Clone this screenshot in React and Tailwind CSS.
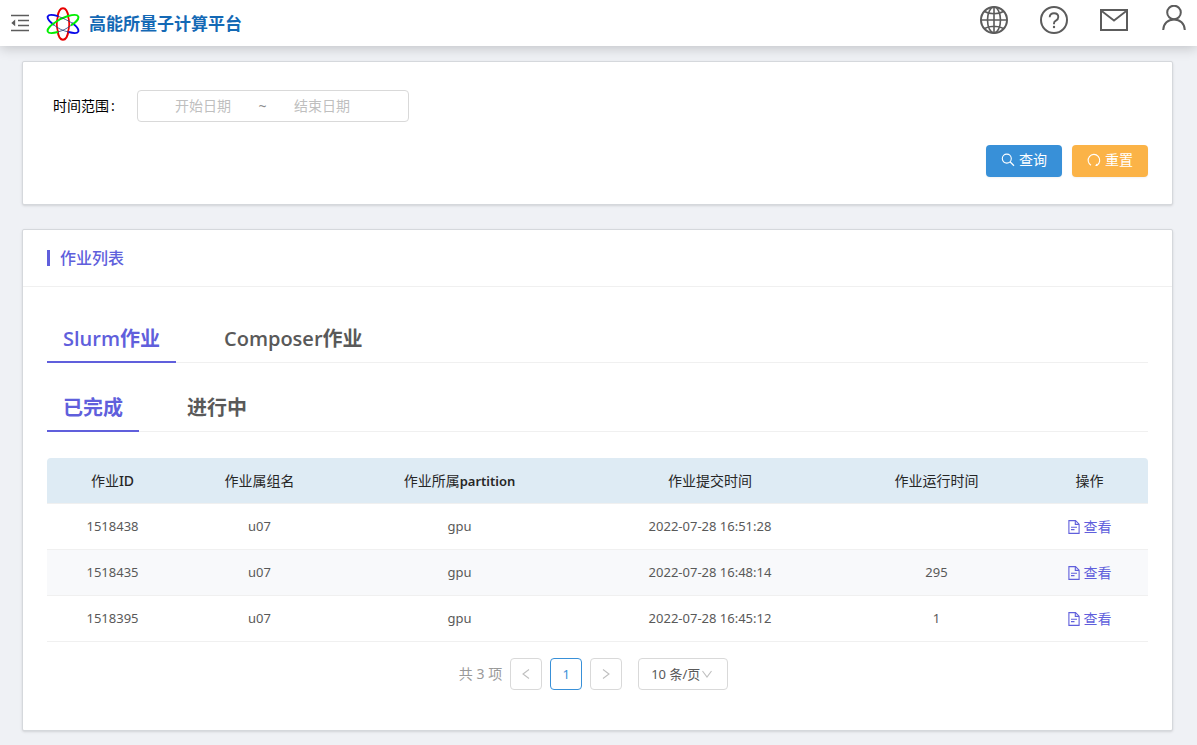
import React, { useState } from "react";

const jobs = [
    { id: "1518438", group: "u07", partition: "gpu", submitTime: "2022-07-28 16:51:28", runTime: "" },
    { id: "1518435", group: "u07", partition: "gpu", submitTime: "2022-07-28 16:48:14", runTime: "295" },
    { id: "1518395", group: "u07", partition: "gpu", submitTime: "2022-07-28 16:45:12", runTime: "1" },
];

const FoldIcon = () => (
    <svg width="18" height="18" viewBox="0 0 18 18" fill="none" stroke="#5c5c5c" strokeWidth="1.7">
        <path d="M0 1.5H18M7 6.5H18M7 11.5H18M0 16.5H18" />
        <path d="M4.2 5.5V12.3L0.3 8.9Z" fill="#5c5c5c" stroke="none" />
    </svg>
);

const Logo = () => (
    <svg width="34" height="34" viewBox="0 0 34 34" fill="none" strokeWidth="1.7">
        <path d="M12 9C10.5 14 10.5 20 12 25M22 9C23.5 14 23.5 20 22 25" stroke="#f00000" />
        <path d="M11.6 10C12.5 3.5 15 1.3 17 1.3C19 1.3 21.5 3.5 22.4 10M11.6 24C12.5 30.5 15 32.7 17 32.7C19 32.7 21.5 30.5 22.4 24" stroke="#e80000" strokeWidth="2" />
        <path d="M12 9.2C6 7.5 2.5 7.8 1.8 9.3C1 11.2 3.5 14.6 8 18M22.5 25C28 26.5 31.5 26.2 32.2 24.7C33 22.8 30.5 19.2 26 16" stroke="#0808e8" strokeWidth="1.9" />
        <path d="M22 9C28 7.4 31.5 7.8 32.2 9.3C33 11.2 30.5 15 25 18.4M12 25C6 26.5 2.5 26.2 1.8 24.7C1 22.8 3.5 19 9 15.5C13.5 12.2 17.5 10.3 22 9" stroke="#00ee00" strokeWidth="1.9" />
        <path d="M12 9.2C17 11.2 22 13.5 26 16M8 18C12 21.5 17 23.8 22.5 25M25 18.4C21 21.5 17 23.5 12 25" stroke="#24407a" strokeWidth="0.8" />
    </svg>
);

const GlobeIcon = () => (
    <svg width="28" height="28" viewBox="0 0 28 28" fill="none" stroke="#5c5c5c" strokeWidth="1.6">
        <circle cx="14" cy="14" r="13" strokeWidth="2" />
        <ellipse cx="14" cy="14" rx="6.5" ry="13" />
        <path d="M14 1V27M1 14H27M4 5.3C9.5 8.6 18.5 8.6 24 5.3M4 22.7C9.5 19.4 18.5 19.4 24 22.7" />
    </svg>
);

const HelpIcon = () => (
    <svg width="28" height="28" viewBox="0 0 28 28" fill="none" stroke="#5c5c5c">
        <circle cx="14" cy="14" r="13" strokeWidth="2" />
        <path d="M9.7 11.3C9.7 8.7 11.5 7.3 14 7.3C16.5 7.3 18.3 8.8 18.3 11.1C18.3 12.9 17.3 13.9 15.9 14.6C14.6 15.3 14 15.9 14 17.2V18.3" strokeWidth="1.9" />
        <circle cx="14" cy="21" r="1.2" fill="#5c5c5c" stroke="none" />
    </svg>
);

const MailIcon = () => (
    <svg width="28" height="22" viewBox="0 0 28 22" fill="none" stroke="#5c5c5c" strokeWidth="2">
        <rect x="1" y="1" width="26" height="20" />
        <path d="M2 2.2L14 11.5L26 2.2" strokeWidth="1.8" />
    </svg>
);

const UserIcon = () => (
    <svg width="24" height="26" viewBox="0 0 24 26" fill="none" stroke="#5c5c5c" strokeWidth="2">
        <circle cx="12" cy="7.5" r="6.8" />
        <path d="M1.2 25C1.4 18.5 6 14.4 12 14.4C18 14.4 22.6 18.5 22.8 25" />
    </svg>
);

const SearchIcon = () => (
    <svg width="14" height="14" viewBox="0 0 14 14" fill="none" stroke="currentColor" strokeWidth="1.1">
        <circle cx="5.8" cy="5.6" r="4.5" />
        <path d="M9 8.8L13 12.8" strokeWidth="1.3" />
    </svg>
);

const ResetIcon = () => (
    <svg width="14" height="14" viewBox="0 0 14 14" fill="none" stroke="currentColor" strokeWidth="1.1">
        <path d="M4 12.2A5.8 5.8 0 1 1 10.2 12" />
        <path d="M8.2 12.9L9.6 10.6L10.8 13Z" fill="currentColor" stroke="none" />
    </svg>
);

const FileIcon = () => (
    <svg width="12" height="14" viewBox="0 0 12 14" fill="none" stroke="currentColor" strokeWidth="1.1">
        <path d="M0.9 0.6H7.5L11.1 4.2V13.4H0.9Z" />
        <path d="M7.3 0.8V4.4H11" />
        <path d="M3 7.2H9M3 9.6H6.5" />
    </svg>
);

const Chevron = ({ d }) => (
    <svg width="10" height="10" viewBox="0 0 10 10" fill="none" stroke="#bfbfbf" strokeWidth="1.1">
        <path d={d} />
    </svg>
);

const Tabs = ({ items, active, onChange }) => (
    <div role="tablist" className="flex h-[52px] gap-8 border-b border-[#f0f0f0] font-['Open_Sans','Noto_Sans_CJK_SC',sans-serif]">
        {items.map((item) => (
            <button
                key={item}
                role="tab"
                aria-selected={item === active}
                onClick={() => onChange(item)}
                className={
                    item === active
                        ? "h-[52px] px-4 pt-[6px] text-xl font-semibold text-[#605fdc] border-b-2 border-[#605fdc]"
                        : "h-[52px] px-4 pt-[6px] text-xl font-semibold text-[#595959] border-b-2 border-transparent"
                }
            >
                {item}
            </button>
        ))}
    </div>
);

const App = () => {
    const [jobType, setJobType] = useState("Slurm作业");
    const [status, setStatus] = useState("已完成");
    const [startDate, setStartDate] = useState("");
    const [endDate, setEndDate] = useState("");

    const handleReset = () => {
        setStartDate("");
        setEndDate("");
    };

    return (
        <div className="min-h-screen bg-[#eff1f5] pb-3 font-['Noto_Sans','Noto_Sans_CJK_SC',sans-serif] text-sm text-[#595959]">
            <header className="relative flex h-[46px] items-center justify-between bg-white px-[11px] shadow-[0_2px_12px_rgba(0,0,0,0.2)]">
                <div className="flex items-center">
                    <button aria-label="折叠菜单"><FoldIcon /></button>
                    <a href="#" className="ml-[17px] flex items-center gap-[9px] pt-[2px]">
                        <Logo />
                        <span className="text-[17px] font-bold text-[#1469b5]">高能所量子计算平台</span>
                    </a>
                </div>
                <div className="flex items-center gap-8 pb-[6px]">
                    <button aria-label="语言"><GlobeIcon /></button>
                    <button aria-label="帮助"><HelpIcon /></button>
                    <button aria-label="消息"><MailIcon /></button>
                    <button aria-label="用户" className="pb-1 pl-[2px]"><UserIcon /></button>
                </div>
            </header>

            <main className="ml-[22px] mr-6 mt-[15px] space-y-6">
                {/* Search form */}
                <section className="rounded-xs border border-[#d5d8dc] bg-white px-6 pb-[27px] pt-7 shadow-sm">
                    <div className="flex items-center pl-[6px]">
                        <label htmlFor="startDate" className="flex w-[84px] gap-[2px] text-black">
                            时间范围<span>:</span>
                        </label>
                        <div className="flex h-8 w-[272px] items-center rounded border border-[#d9d9d9] pl-[10px]">
                            <input
                                id="startDate"
                                type="text"
                                placeholder="开始日期"
                                value={startDate}
                                onChange={(e) => setStartDate(e.target.value)}
                                className="w-[110px] text-center outline-none placeholder:text-[#bfbfbf]"
                            />
                            <span className="w-[9px] text-center text-[#8c8c8c]">~</span>
                            <input
                                type="text"
                                aria-label="结束日期"
                                placeholder="结束日期"
                                value={endDate}
                                onChange={(e) => setEndDate(e.target.value)}
                                className="w-[110px] text-center outline-none placeholder:text-[#bfbfbf]"
                            />
                        </div>
                    </div>
                    <div className="mt-[23px] flex justify-end gap-[10px]">
                        <button className="flex h-8 w-[76px] items-center justify-center gap-1 rounded bg-[#3890d8] pb-[2px] text-white shadow-xs">
                            <SearchIcon />
                            查询
                        </button>
                        <button
                            onClick={handleReset}
                            className="flex h-8 w-[76px] items-center justify-center gap-1 rounded bg-[#fbb347] pb-[2px] text-white shadow-xs"
                        >
                            <ResetIcon />
                            重置
                        </button>
                    </div>
                </section>

                {/* Job list */}
                <section className="rounded-xs border border-[#d5d8dc] bg-white shadow-sm">
                    <div className="flex h-[57px] items-center border-b border-[#f0f0f0] px-6">
                        <span className="h-4 w-[3px] bg-[#605fdc]" />
                        <h2 className="ml-[10px] text-base font-medium text-[#605fdc]">作业列表</h2>
                    </div>
                    <div className="px-6 pb-10 pt-6">
                        <Tabs items={["Slurm作业", "Composer作业"]} active={jobType} onChange={setJobType} />
                        <div className="mt-[17px]">
                            <Tabs items={["已完成", "进行中"]} active={status} onChange={setStatus} />
                        </div>

                        <table className="mt-[26px] w-full table-fixed border-separate border-spacing-0 text-center">
                            <thead>
                                <tr className="h-[46px] text-[#262626]">
                                    <th className="w-[131px] rounded-tl border-b border-[#f0f0f0] bg-[#deebf4] font-normal">作业<span className="font-medium">ID</span></th>
                                    <th className="w-[163px] border-b border-[#f0f0f0] bg-[#deebf4] font-normal">作业属组名</th>
                                    <th className="w-[237px] border-b border-[#f0f0f0] bg-[#deebf4] font-normal">作业所属<span className="text-[13px] font-semibold">partition</span></th>
                                    <th className="w-[264px] border-b border-[#f0f0f0] bg-[#deebf4] font-normal">作业提交时间</th>
                                    <th className="w-[189px] border-b border-[#f0f0f0] bg-[#deebf4] font-normal">作业运行时间</th>
                                    <th className="w-[117px] rounded-tr border-b border-[#f0f0f0] bg-[#deebf4] font-normal">操作</th>
                                </tr>
                            </thead>
                            <tbody>
                                {jobs.map((job) => (
                                    <tr key={job.id} className="h-[46px] text-[13px] even:bg-[#f8f9fb]">
                                        <td className="border-b border-[#f0f0f0]">{job.id}</td>
                                        <td className="border-b border-[#f0f0f0]">{job.group}</td>
                                        <td className="border-b border-[#f0f0f0]">{job.partition}</td>
                                        <td className="border-b border-[#f0f0f0]">{job.submitTime}</td>
                                        <td className="border-b border-[#f0f0f0]">{job.runTime}</td>
                                        <td className="border-b border-[#f0f0f0]">
                                            <a href="#" className="flex items-center justify-center gap-1 text-sm text-[#605fdc]">
                                                <FileIcon />
                                                查看
                                            </a>
                                        </td>
                                    </tr>
                                ))}
                            </tbody>
                        </table>

                        {/* Pagination */}
                        <nav className="mt-4 flex items-center justify-center gap-2 pr-2">
                            <span className="text-[#999999]">共 3 项</span>
                            <button aria-label="上一页" className="flex size-8 items-center justify-center rounded border border-[#d9d9d9]">
                                <Chevron d="M8 0.5L2 5L8 9.5" />
                            </button>
                            <button className="size-8 rounded border border-[#3890d8] text-[13px] text-[#3890d8]">1</button>
                            <button aria-label="下一页" className="flex size-8 items-center justify-center rounded border border-[#d9d9d9]">
                                <Chevron d="M2 0.5L8 5L2 9.5" />
                            </button>
                            <div className="relative ml-2">
                                <select
                                    aria-label="每页条数"
                                    className="h-8 w-[90px] appearance-none rounded border border-[#d9d9d9] bg-white pl-3 text-[13px] outline-none"
                                >
                                    <option>10 条/页</option>
                                    <option>20 条/页</option>
                                    <option>50 条/页</option>
                                </select>
                                <span className="pointer-events-none absolute right-4 top-[11px]">
                                    <Chevron d="M0.5 2L5 8L9.5 2" />
                                </span>
                            </div>
                        </nav>
                    </div>
                </section>
            </main>
        </div>
    );
};

export default App;
